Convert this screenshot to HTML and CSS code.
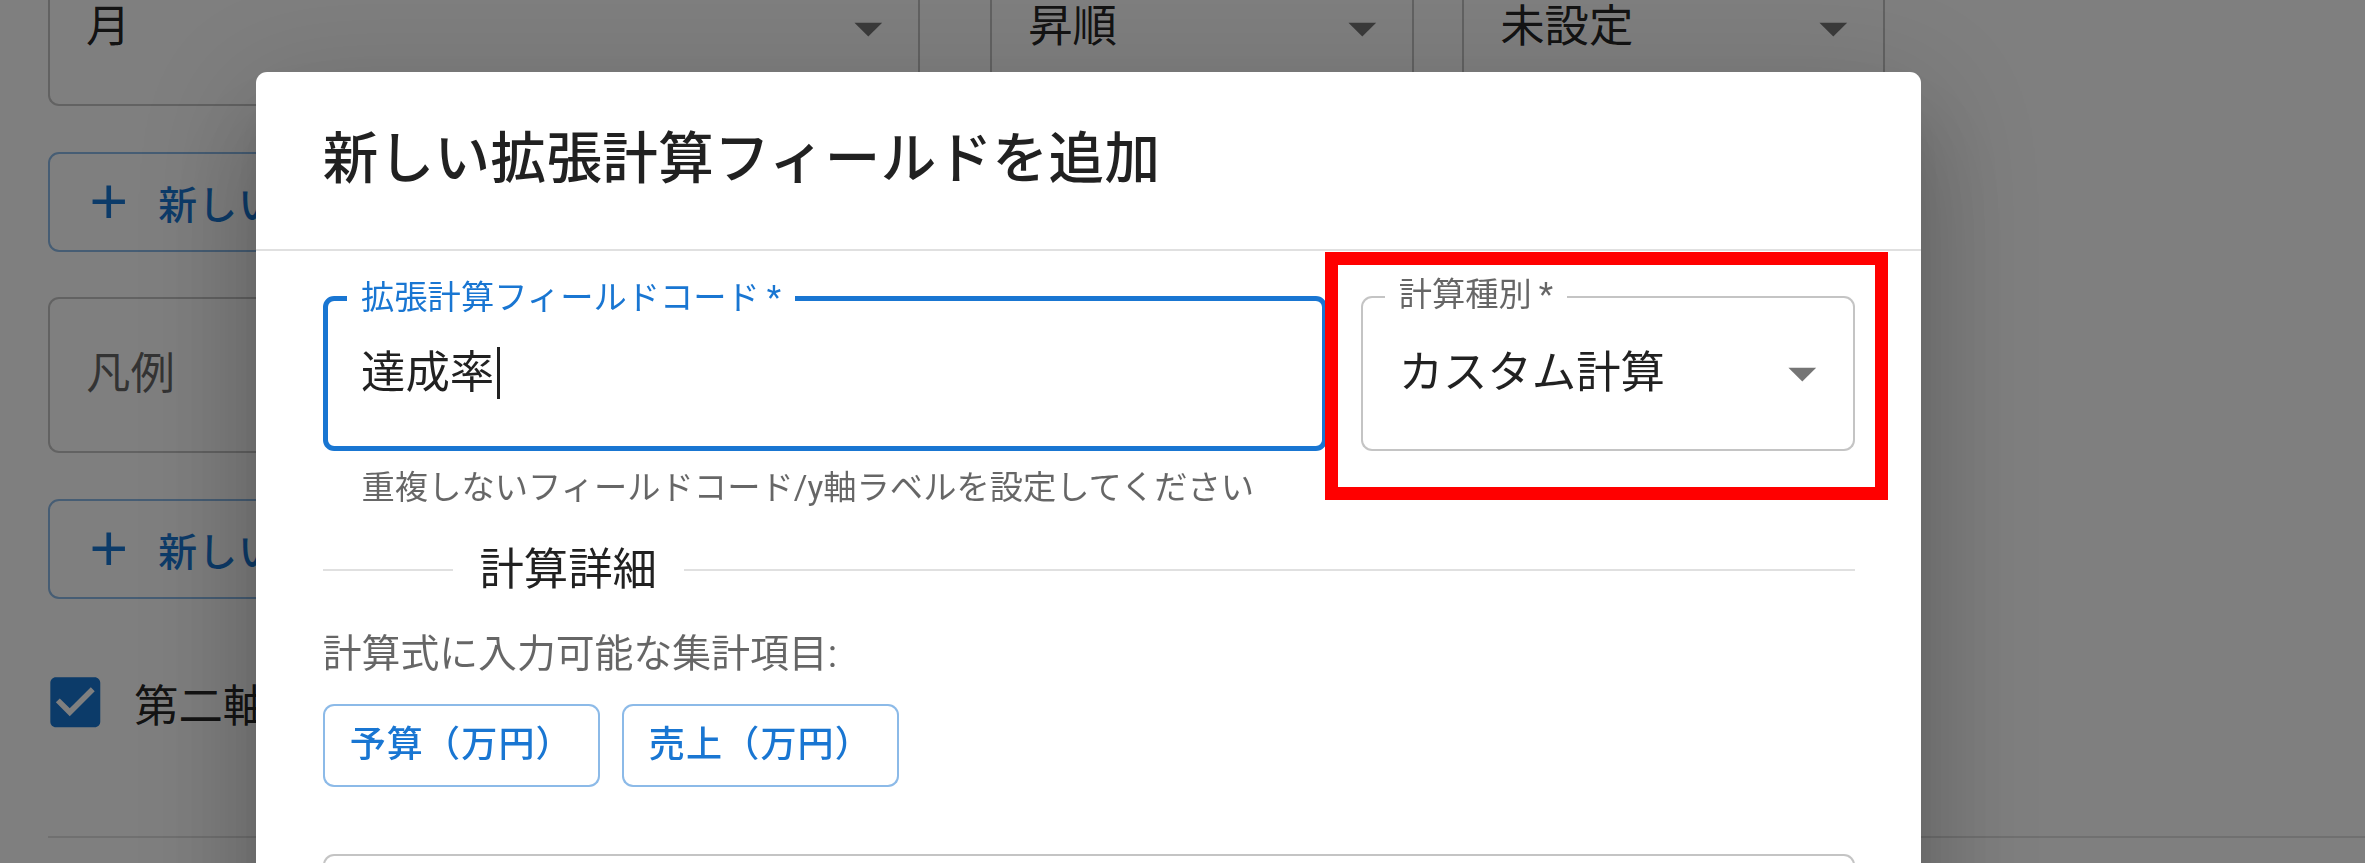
FILE: index.html
```html
<!DOCTYPE html>
<html lang="ja">
<head>
    <meta charset="UTF-8">
    <title>拡張計算フィールド</title>
    <link rel="stylesheet" href="styles.css">
</head>
<body>

    <!-- 後ろのグラフ設定フォーム -->
    <div class="page">
        <div class="select-row">
            <div class="outlined bg-month">
                <span class="value">月</span>
                <svg class="arrow" viewBox="0 0 24 24"><path d="M7 10l5 5 5-5z"/></svg>
            </div>
            <div class="outlined bg-order">
                <span class="value">昇順</span>
                <svg class="arrow" viewBox="0 0 24 24"><path d="M7 10l5 5 5-5z"/></svg>
            </div>
            <div class="outlined bg-limit">
                <span class="value">未設定</span>
                <svg class="arrow" viewBox="0 0 24 24"><path d="M7 10l5 5 5-5z"/></svg>
            </div>
        </div>

        <button class="btn-outline">
            <svg class="plus" viewBox="0 0 24 24"><path d="M19 13h-6v6h-2v-6H5v-2h6V5h2v6h6v2z"/></svg>
            新しい
        </button>

        <div class="outlined bg-legend">
            <span class="placeholder">凡例</span>
        </div>

        <button class="btn-outline">
            <svg class="plus" viewBox="0 0 24 24"><path d="M19 13h-6v6h-2v-6H5v-2h6V5h2v6h6v2z"/></svg>
            新しい
        </button>

        <label class="check">
            <span class="check-box">
                <svg viewBox="0 0 24 24"><path d="M19 3H5c-1.11 0-2 .9-2 2v14c0 1.1.89 2 2 2h14c1.11 0 2-.9 2-2V5c0-1.1-.89-2-2-2zm-9 14l-5-5 1.41-1.41L10 14.17l7.59-7.59L19 8l-9 9z"/></svg>
            </span>
            第二軸
        </label>

        <hr class="page-divider">
    </div>

    <div class="backdrop"></div>

    <!-- ダイアログ -->
    <div class="dialog">
        <h2 class="dialog-title">新しい拡張計算フィールドを追加</h2>

        <div class="dialog-content">
            <div class="field-row">
                <div class="text-field">
                    <div class="outlined focused">
                        <label class="float-label">拡張計算フィールドコード&thinsp;*</label>
                        <span class="value">達成率<span class="caret"></span></span>
                    </div>
                    <p class="helper">重複しないフィールドコード/y軸ラベルを設定してください</p>
                </div>

                <div class="select-field">
                    <div class="outlined">
                        <label class="float-label">計算種別&thinsp;*</label>
                        <span class="value">カスタム計算</span>
                        <svg class="arrow light" viewBox="0 0 24 24"><path d="M7 10l5 5 5-5z"/></svg>
                    </div>
                    <!-- 注目枠 -->
                    <div class="highlight"></div>
                </div>
            </div>

            <div class="section-divider"><span>計算詳細</span></div>

            <p class="note">計算式に入力可能な集計項目:</p>

            <div class="item-buttons">
                <button class="btn-small">予算（万円）</button>
                <button class="btn-small">売上（万円）</button>
            </div>

            <div class="outlined formula"></div>
        </div>
    </div>

</body>
</html>
```

FILE: styles.css
```css
/*
   画面全体を 2.775 倍で表示している
   主色 : #1976d2
*/
html, body{
    margin: 0;
    height: 100%;
    overflow: hidden;
}

body{
    zoom: 2.775;
    background-color: #fff;
    font-family: Roboto, "Noto Sans CJK JP", sans-serif;
    color: rgba(0,0,0,.87);
}

/* ---------- 後ろのフォーム ---------- */
.page{
    display: flex;
    flex-direction: column;
    align-items: flex-start;
    gap: 16.5px;
    margin-top: -17.8px;
    padding-left: 17.3px;
}

.select-row{
    display: flex;
}

.outlined{
    position: relative;
    box-sizing: border-box;
    height: 56px;
    display: flex;
    align-items: center;
    padding: 0 13px;
    border: 1px solid rgba(0,0,0,.23);
    border-radius: 4px;
    background-color: #fff;
    font-size: 16px;
}

.outlined .value{
    line-height: 23px;
    white-space: nowrap;
}

.bg-month{ width: 314.2px; margin-right: 25.3px; }
.bg-order{ width: 152.8px; margin-right: 17.3px; }
.bg-limit{ width: 152.5px; }
.bg-legend{ width: 662px; }

.placeholder{
    color: rgba(0,0,0,.6);
    line-height: 23px;
}

.arrow{
    position: absolute;
    right: 6px;
    top: 50%;
    width: 24px;
    height: 24px;
    margin-top: -12px;
    fill: rgba(0,0,0,.54);
}

.btn-outline{
    display: flex;
    align-items: center;
    box-sizing: border-box;
    width: 662px;
    height: 36px;
    padding: 5px 15px;
    border: 1px solid rgba(25,118,210,.5);
    border-radius: 4px;
    background: transparent;
    color: #1976d2;
    font-family: inherit;
    font-size: 14px;
    font-weight: 500;
    letter-spacing: .4px;
    white-space: nowrap;
}

.plus{
    width: 20px;
    height: 20px;
    margin: 0 8px 0 -4px;
    fill: currentColor;
}

.check{
    display: flex;
    align-items: center;
    margin-left: -11px;
    font-size: 16px;
    white-space: nowrap;
}

.check-box{
    display: flex;
    padding: 9px;
}

.check-box svg{
    width: 24px;
    height: 24px;
    fill: #1976d2;
}

.page-divider{
    align-self: stretch;
    margin: 10.6px 0 0;
    border: none;
    border-top: 1px solid rgba(0,0,0,.12);
}

/* ---------- ダイアログ ---------- */
.backdrop{
    position: fixed;
    inset: 0;
    background-color: rgba(0,0,0,.5);
}

.dialog{
    position: fixed;
    left: 92.3px;
    top: 25.9px;
    width: 600px;
    height: 420px;
    background-color: #fff;
    border-radius: 4px;
    box-shadow: 0 11px 15px -7px rgba(0,0,0,.2), 0 24px 38px 3px rgba(0,0,0,.14), 0 9px 46px 8px rgba(0,0,0,.12);
}

.dialog-title{
    margin: 0;
    padding: 16px 24px;
    font-size: 20px;
    font-weight: 500;
    line-height: 1.6;
    letter-spacing: .0075em;
}

.dialog-content{
    padding: 16px 24px;
    border-top: 1px solid rgba(0,0,0,.12);
}

.field-row{
    display: flex;
    gap: 12px;
}

.text-field{
    flex: 1;
}

.select-field{
    position: relative;
    width: 178px;
}

/* フォーカス中の入力欄 */
.outlined.focused{
    border: 2px solid #1976d2;
    padding: 0 12px;
}

.float-label{
    position: absolute;
    left: 8px;
    top: -7px;
    padding: 0 5px;
    background-color: #fff;
    font-size: 12px;
    line-height: 12px;
    color: rgba(0,0,0,.6);
    white-space: nowrap;
}

.focused .float-label{
    left: 7px;
    color: #1976d2;
}

.caret{
    display: inline-block;
    width: 1px;
    height: 18.5px;
    margin-left: 1px;
    vertical-align: -4px;
    background-color: rgba(0,0,0,.87);
}

.helper{
    margin: 3px 14px 0;
    font-size: 12px;
    line-height: 1.66;
    color: rgba(0,0,0,.6);
    white-space: nowrap;
}

.highlight{
    position: absolute;
    left: -13px;
    top: -15.8px;
    width: 203.2px;
    height: 89.4px;
    box-sizing: border-box;
    border: 5px solid #ff0000;
}

.section-divider{
    display: flex;
    margin-top: 8px;
    white-space: nowrap;
    font-size: 16px;
    line-height: 1.5;
}

.section-divider::before,
.section-divider::after{
    content: "";
    align-self: center;
    border-top: 1px solid rgba(0,0,0,.12);
}

.section-divider::before{ width: 10%; }
.section-divider::after{ width: 90%; }

.section-divider span{
    padding: 0 9.6px;
}

.note{
    margin: 8px 0 0;
    font-size: 14px;
    line-height: 1.43;
    color: rgba(0,0,0,.6);
}

.item-buttons{
    display: flex;
    gap: 8px;
    margin-top: 8px;
}

.btn-small{
    padding: 3px 9px;
    border: 1px solid rgba(25,118,210,.5);
    border-radius: 4px;
    background: #fff;
    color: #1976d2;
    font-family: inherit;
    font-size: 13px;
    font-weight: 500;
    line-height: 1.75;
    letter-spacing: .4px;
}

.formula{
    margin-top: 24px;
    height: 120px;
}
```
